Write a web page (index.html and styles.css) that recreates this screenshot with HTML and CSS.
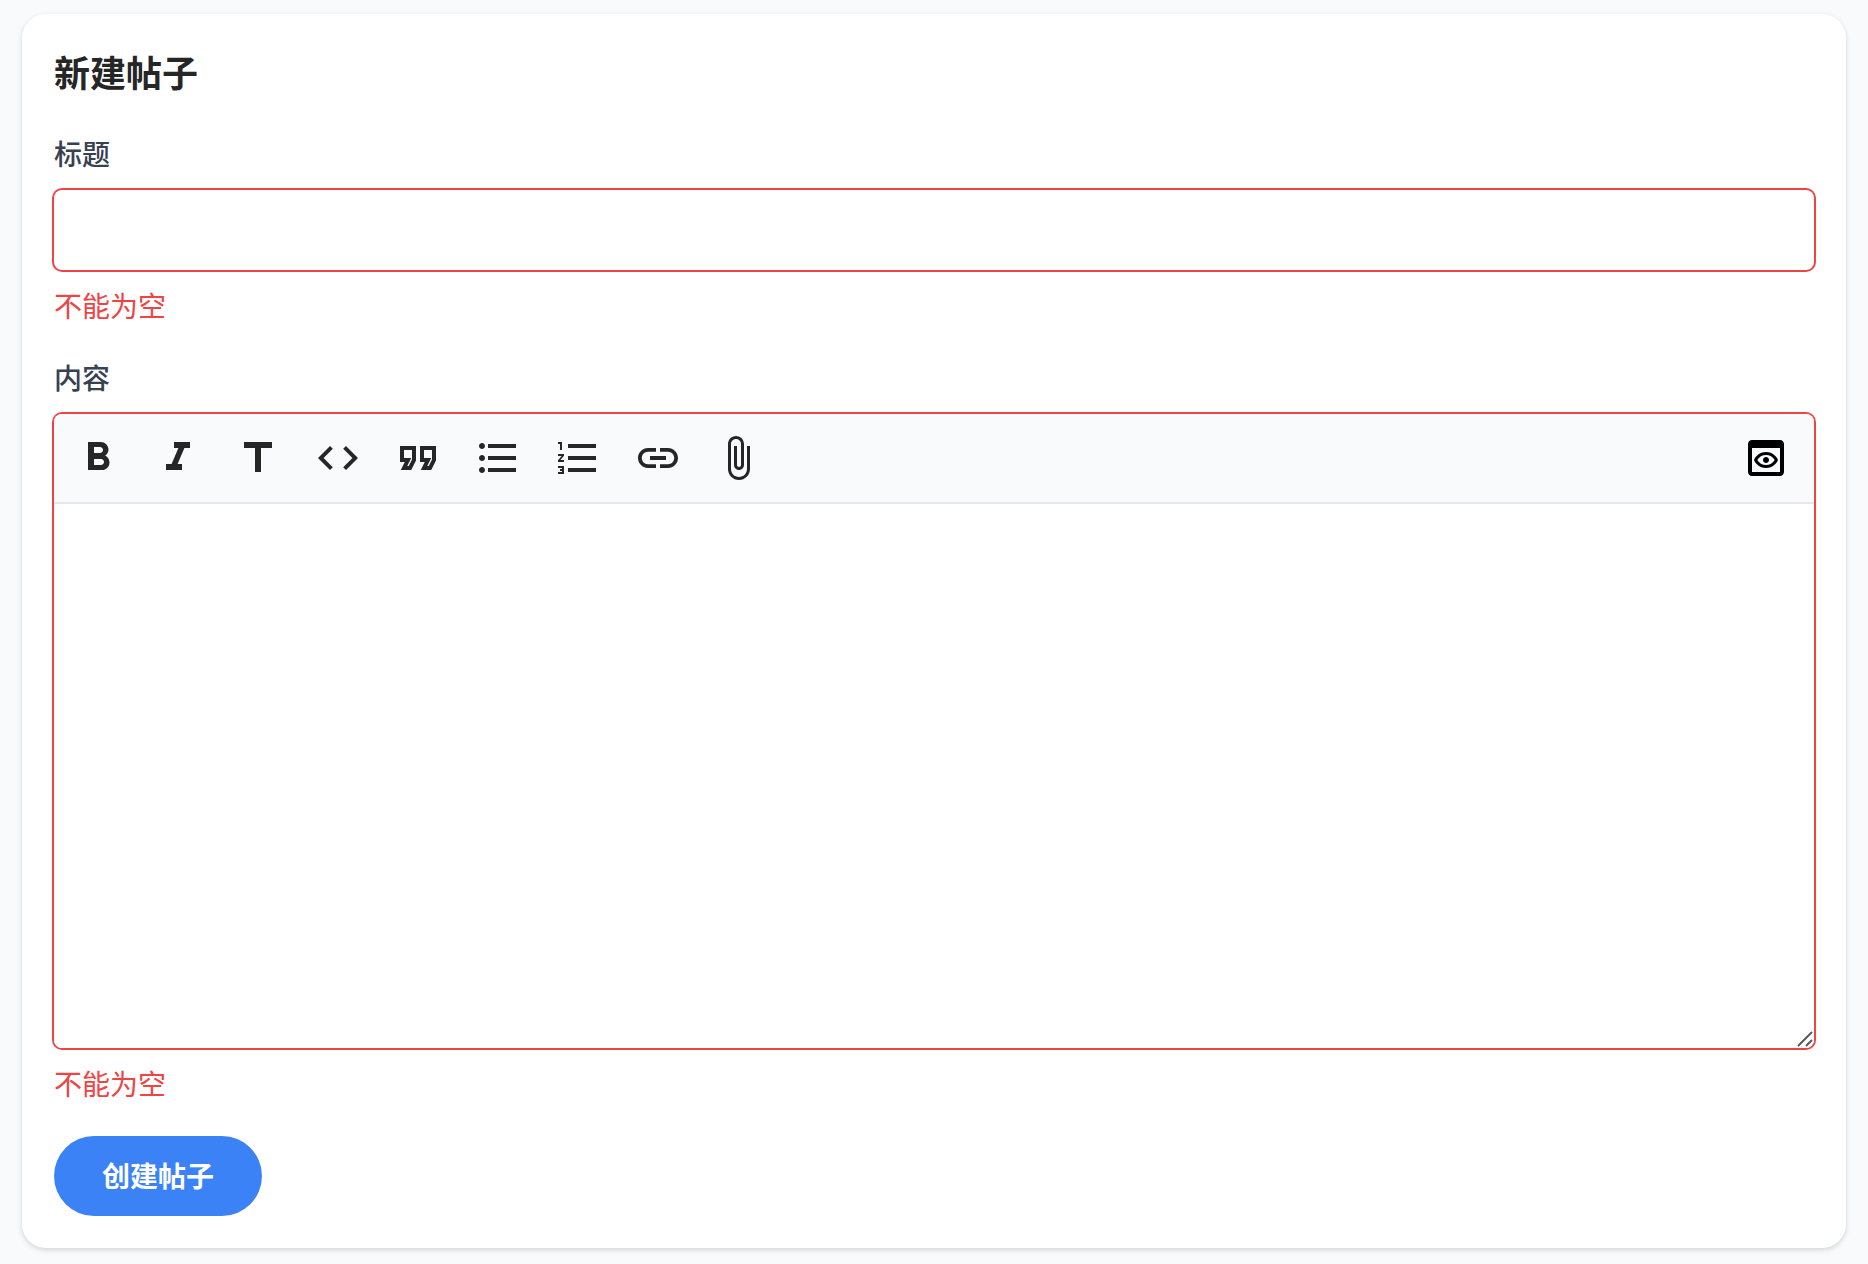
FILE: index.html
```
<!DOCTYPE html>
<html lang="zh-CN">
<head>
    <meta charset="UTF-8">
    <meta name="viewport" content="width=device-width, initial-scale=1.0">
    <title>新建帖子</title>
    <link rel="stylesheet" href="styles.css">
</head>
<body>
    <main class="card">
        <h1>新建帖子</h1>

        <form class="post-form" novalidate>
            <div class="form-group">
                <label for="title">标题</label>
                <input type="text" class="field" id="title" aria-invalid="true" aria-describedby="title-error">
                <p class="error" id="title-error">不能为空</p>
            </div>

            <div class="form-group">
                <label for="content">内容</label>
                <div class="field editor">
                    <div class="toolbar">
                        <button type="button" aria-label="粗体">
                            <svg viewBox="0 0 24 24"><path d="M15.6 10.79c.97-.67 1.65-1.77 1.65-2.79 0-2.26-1.75-4-4-4H7v14h7.04c2.09 0 3.71-1.7 3.71-3.79 0-1.52-.86-2.82-2.15-3.42zM10 6.5h3c.83 0 1.5.67 1.5 1.5s-.67 1.5-1.5 1.5h-3v-3zm3.5 9H10v-3h3.5c.83 0 1.5.67 1.5 1.5s-.67 1.5-1.5 1.5z"/></svg>
                        </button>
                        <button type="button" aria-label="斜体">
                            <svg viewBox="0 0 24 24"><path d="M10 4v3h2.21l-3.42 8H6v3h8v-3h-2.21l3.42-8H18V4z"/></svg>
                        </button>
                        <button type="button" aria-label="标题文字">
                            <svg viewBox="0 0 24 24"><path d="M5 4v3h5.5v12h3V7H19V4z"/></svg>
                        </button>
                        <button type="button" aria-label="代码">
                            <svg viewBox="0 0 24 24"><path d="M9.4 16.6 4.8 12l4.6-4.6L8 6l-6 6 6 6 1.4-1.4zm5.2 0 4.6-4.6-4.6-4.6L16 6l6 6-6 6-1.4-1.4z"/></svg>
                        </button>
                        <button type="button" aria-label="引用">
                            <svg viewBox="0 0 24 24"><path d="M18.62 18h-5.24l2-4H13V6h8v7.24L18.62 18zm-2-2h.76L19 12.76V8h-4v4h3.62l-2 4zm-8 2H3.38l2-4H3V6h8v7.24L8.62 18zm-2-2h.76L9 12.76V8H5v4h3.62l-2 4z"/></svg>
                        </button>
                        <button type="button" aria-label="无序列表">
                            <svg viewBox="0 0 24 24"><path d="M4 10.5c-.83 0-1.5.67-1.5 1.5s.67 1.5 1.5 1.5 1.5-.67 1.5-1.5-.67-1.5-1.5-1.5zm0-6c-.83 0-1.5.67-1.5 1.5S3.17 7.5 4 7.5 5.5 6.83 5.5 6 4.83 4.5 4 4.5zm0 12c-.83 0-1.5.68-1.5 1.5s.68 1.5 1.5 1.5 1.5-.68 1.5-1.5-.67-1.5-1.5-1.5zM7 19h14v-2H7v2zm0-6h14v-2H7v2zm0-8v2h14V5H7z"/></svg>
                        </button>
                        <button type="button" aria-label="有序列表">
                            <svg viewBox="0 0 24 24"><path d="M2 17h2v.5H3v1h1v.5H2v1h3v-4H2v1zm1-9h1V4H2v1h1v3zm-1 3h1.8L2 13.1v.9h3v-1H3.2L5 10.9V10H2v1zm5-6v2h14V5H7zm0 14h14v-2H7v2zm0-6h14v-2H7v2z"/></svg>
                        </button>
                        <button type="button" aria-label="链接">
                            <svg viewBox="0 0 24 24"><path d="M3.9 12c0-1.71 1.39-3.1 3.1-3.1h4V7H7c-2.76 0-5 2.24-5 5s2.24 5 5 5h4v-1.9H7c-1.71 0-3.1-1.39-3.1-3.1zM8 13h8v-2H8v2zm9-6h-4v1.9h4c1.71 0 3.1 1.39 3.1 3.1s-1.39 3.1-3.1 3.1h-4V17h4c2.76 0 5-2.24 5-5s-2.24-5-5-5z"/></svg>
                        </button>
                        <button type="button" aria-label="附件">
                            <svg viewBox="0 0 24 24"><path d="M16.5 6v11.5c0 2.21-1.79 4-4 4s-4-1.79-4-4V5c0-1.38 1.12-2.5 2.5-2.5s2.5 1.12 2.5 2.5v10.5c0 .55-.45 1-1 1s-1-.45-1-1V6H10v9.5c0 1.38 1.12 2.5 2.5 2.5s2.5-1.12 2.5-2.5V5c0-2.21-1.79-4-4-4S7 2.79 7 5v12.5c0 3.04 2.46 5.5 5.5 5.5s5.5-2.46 5.5-5.5V6h-1.5z"/></svg>
                        </button>
                        <button type="button" class="preview-btn" aria-label="预览">
                            <svg viewBox="0 0 24 24"><path d="M19 3H5c-1.11 0-2 .9-2 2v14c0 1.1.89 2 2 2h14c1.1 0 2-.9 2-2V5c0-1.1-.89-2-2-2zm0 16H5V7h14v12zm-7-8.5c1.84 0 3.48.96 4.34 2.5-.86 1.54-2.5 2.5-4.34 2.5S8.52 14.54 7.66 13c.86-1.54 2.5-2.5 4.34-2.5M12 9c-2.73 0-5.06 1.66-6 4 .94 2.34 3.27 4 6 4s5.06-1.66 6-4c-.94-2.34-3.27-4-6-4zm0 5.5c-.83 0-1.5-.67-1.5-1.5s.67-1.5 1.5-1.5 1.5.67 1.5 1.5-.67 1.5-1.5 1.5z"/></svg>
                        </button>
                    </div>
                    <textarea id="content" aria-invalid="true" aria-describedby="content-error"></textarea>
                    <svg class="resize-grip" viewBox="0 0 16 16" aria-hidden="true"><path d="M1 15 15 1M9 15l6-6"/></svg>
                </div>
                <p class="error" id="content-error">不能为空</p>
            </div>

            <button type="submit" class="submit-btn">创建帖子</button>
        </form>
    </main>
</body>
</html>
```

FILE: styles.css
```
* {
    box-sizing: border-box;
}
body {
    margin: 0;
    padding: 14px 22px 16px;
    background-color: #f9fafb;
    color: #262626;
    font-family: "Noto Sans", "Noto Sans CJK SC", sans-serif;
    font-size: 28px;
    line-height: 40px;
}
.card {
    padding: 32px;
    background: white;
    border-radius: 24px;
    box-shadow: 0 2px 6px rgba(0, 0, 0, 0.1), 0 2px 4px rgba(0, 0, 0, 0.06);
}
h1 {
    margin: 0 0 32px;
    font-size: 36px;
    font-weight: 700;
    line-height: 56px;
}
.post-form {
    display: flex;
    flex-direction: column;
    align-items: stretch;
    gap: 32px;
}
.form-group {
    display: flex;
    flex-direction: column;
    gap: 16px;
}
label {
    color: #374151;
    font-weight: 500;
}
.field {
    width: 100%;
    border: none;
    border-radius: 8px;
    background: white;
    box-shadow: 0 0 0 2px #ef4444;
    outline: none;
}
input.field {
    height: 80px;
    padding: 0 24px;
    font: inherit;
    color: inherit;
}
.error {
    margin: 0;
    color: #ef4444;
}
/* 编辑器 */
.editor {
    position: relative;
    overflow: hidden;
}
.toolbar {
    display: flex;
    gap: 32px;
    padding: 20px 24px 20px 20px;
    background-color: #f9fafb;
    border-bottom: 2px solid #e5e7eb;
}
.toolbar button {
    display: flex;
    padding: 0;
    border: none;
    background: none;
    color: #262626;
    cursor: pointer;
}
.toolbar svg {
    width: 48px;
    height: 48px;
    fill: currentColor;
}
.toolbar .preview-btn {
    margin-left: auto;
    color: black;
}
.editor textarea {
    display: block;
    width: 100%;
    height: 544px;
    padding: 16px 24px;
    border: none;
    outline: none;
    background: white;
    font: inherit;
    color: inherit;
    resize: vertical;
}
.editor textarea::-webkit-resizer {
    background: transparent;
}
.resize-grip {
    position: absolute;
    right: 1px;
    bottom: 1px;
    width: 16px;
    height: 16px;
    fill: none;
    stroke: #555;
    stroke-width: 1.8;
    pointer-events: none;
}
.submit-btn {
    align-self: flex-start;
    padding: 20px 48px;
    border: none;
    border-radius: 40px;
    background-color: #3b82f6;
    color: white;
    font: inherit;
    font-weight: 700;
    cursor: pointer;
}
```
